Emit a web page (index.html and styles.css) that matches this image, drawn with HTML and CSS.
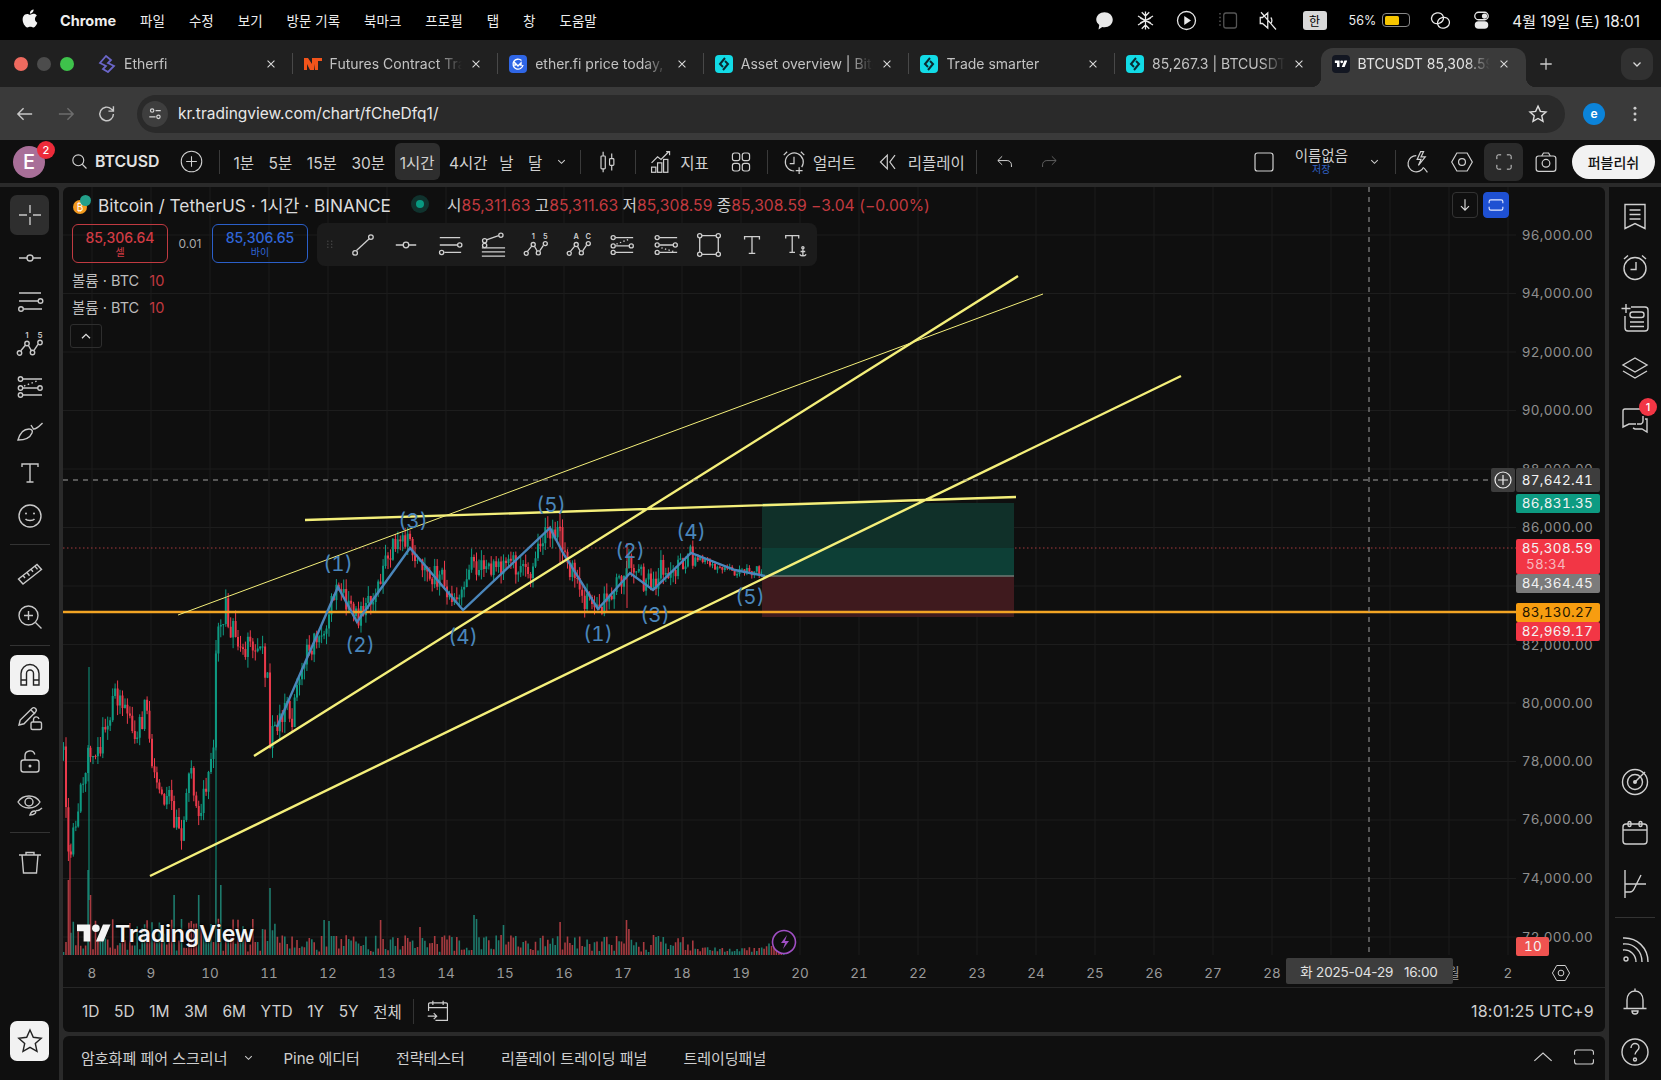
FILE: index.html
```html
<!DOCTYPE html>
<html lang="ko">
<head>
<meta charset="utf-8">
<title>BTCUSDT chart</title>
<link rel="stylesheet" href="styles.css">
</head>
<body>
<svg class="sprite" xmlns="http://www.w3.org/2000/svg">
  <symbol id="i-cross" viewBox="0 0 28 28"><path d="M14 4v8M14 16v8M3 14h8M17 14h8"/></symbol>
  <symbol id="i-hline" viewBox="0 0 28 28"><path d="M3 14h8M17 14h8"/><circle cx="14" cy="14" r="3"/></symbol>
  <symbol id="i-fib" viewBox="0 0 28 28"><path d="M3 6h22M3 14h19M8 22h18"/><circle cx="24.500" cy="14" r="2.300"/><circle cx="5" cy="22" r="2.300"/></symbol>
  <symbol id="i-wave" viewBox="0 0 28 28"><path d="M4.800 20.800l4.600-5.600M12.400 15.500l3 5.200M18 20.400l4-6"/><circle cx="3.500" cy="23" r="2.200"/><circle cx="11" cy="13.500" r="2.200"/><circle cx="16.500" cy="22.500" r="2.200"/><circle cx="24" cy="12.500" r="2.200"/></symbol>
  <symbol id="i-pat" viewBox="0 0 28 28"><path d="M7 6h19M7 15h15M7 22h19"/><path d="M8 13l13-5" stroke-dasharray="1.500 2.500"/><circle cx="4.500" cy="6" r="2.200"/><circle cx="4.500" cy="15" r="2.200"/><circle cx="4.500" cy="22" r="2.200"/><circle cx="24" cy="15" r="2.200"/></symbol>
  <symbol id="i-pat2" viewBox="0 0 28 28"><path d="M7 6h19M7 14h15M7 22h19"/><path d="M9 17l13 4" stroke-dasharray="1.500 2.500"/><circle cx="4.500" cy="6" r="2.200"/><circle cx="4.500" cy="14" r="2.200"/><circle cx="24" cy="14" r="2.200"/><circle cx="4.500" cy="22" r="2.200"/></symbol>
  <symbol id="i-brush" viewBox="0 0 28 28"><path d="M2 24c2-7 6-11 11-11 3 0 4 2 3 4-2 5-8 7-14 7z"/><path d="M15 9l2.500 4c3.500 0 6-3 9-6"/></symbol>
  <symbol id="i-t" viewBox="0 0 28 28"><path d="M6 8V5h16v3M14 5v18M10.500 23h7"/></symbol>
  <symbol id="i-tanchor" viewBox="0 0 28 28"><path d="M4 7V4h14v3M11 4v18M8 22h6"/><circle cx="22.500" cy="17" r="1.200"/><path d="M22.500 18.500v7M19 24c1 1.500 2.200 1.800 3.500 1.800s2.500-.3 3.500-1.800M20 21h5"/></symbol>
  <symbol id="i-smile" viewBox="0 0 28 28"><circle cx="14" cy="14" r="11"/><path d="M9.500 17c1.500 2 7.500 2 9 0"/><circle class="fill" cx="10" cy="11.500" r="1"/><circle class="fill" cx="18" cy="11.500" r="1"/></symbol>
  <symbol id="i-ruler" viewBox="0 0 28 28"><path d="M2.500 19L21 4.500l4.500 5L7 24z"/><path d="M7 15.500l2 2.500M11 12.500l2.500 3.200M15 9.300l2 2.500M19 6.200l2.500 3.200"/></symbol>
  <symbol id="i-zoom" viewBox="0 0 28 28"><circle cx="12.500" cy="12.500" r="9.500"/><path d="M12.500 8v9M8 12.500h9M19.500 19.500l6 6"/></symbol>
  <symbol id="i-magnet" viewBox="0 0 28 28"><path d="M5 24V12.500a9 9 0 0 1 18 0V24h-5.500V12.500a3.500 3.500 0 0 0-7 0V24z"/><path d="M5 19h5.500M17.500 19H23"/></symbol>
  <symbol id="i-penlock" viewBox="0 0 28 28"><path d="M3 21l1.200-5L16 4.500c1-1 2.500-1 3.500 0s1 2.500 0 3.500L8 19.800z"/><path d="M15 6l4 4"/><rect x="15" y="18" width="10.500" height="7.500" rx="1.500"/><path d="M17.500 18v-2.500a2.800 2.800 0 0 1 5.500-.5"/></symbol>
  <symbol id="i-lock" viewBox="0 0 28 28"><rect x="5" y="13" width="18" height="12" rx="2.500"/><path d="M9 13V9a5 5 0 0 1 9.800-1.500"/><circle class="fill" cx="14" cy="19" r="1.500"/></symbol>
  <symbol id="i-eye" viewBox="0 0 28 28"><path d="M2 12c5-8 17-8 22 0-5 8-17 8-22 0z"/><circle cx="13" cy="12" r="4"/><path d="M14 25c1-3 3-4 4.500-4s1.500 1.500.5 2.500-3 1.500-5 1.500zM20 20.500c2 .5 4-.5 6-2.500"/></symbol>
  <symbol id="i-trash" viewBox="0 0 28 28"><path d="M3 7h22M10 7V4.500h8V7M6 7l1.500 18h13L22 7"/></symbol>
  <symbol id="i-star" viewBox="0 0 28 28"><path d="M14 3l3.300 7.300 7.900.9-5.900 5.300 1.700 7.800-7-4-7 4 1.700-7.800-5.900-5.300 7.900-.9z"/></symbol>
  <symbol id="i-trend" viewBox="0 0 28 28"><path d="M7 20L21 7"/><circle cx="5.500" cy="22.500" r="2.500"/><circle cx="22.500" cy="5.500" r="2.500"/></symbol>
  <symbol id="i-pitch" viewBox="0 0 28 28"><path d="M7 8.500l13-4.500M5 12v.5M2 17h25M2 21.500h25M2 26h25"/><circle cx="5" cy="9.500" r="2.300"/><circle cx="22.500" cy="3.500" r="2.300"/><circle cx="5" cy="14.500" r="2.300"/></symbol>
  <symbol id="i-rect" viewBox="0 0 28 28"><path d="M6.500 4h15M6.500 24h15M4 6.500v15M24 6.500v15"/><circle cx="4" cy="4" r="2.300"/><circle cx="24" cy="4" r="2.300"/><circle cx="4" cy="24" r="2.300"/><circle cx="24" cy="24" r="2.300"/></symbol>
  <symbol id="i-search" viewBox="0 0 28 28"><circle cx="12" cy="12" r="9"/><path d="M18.500 18.500l7 7"/></symbol>
  <symbol id="i-plusc" viewBox="0 0 28 28"><circle cx="14" cy="14" r="12.500"/><path d="M14 7.500v13M7.500 14h13"/></symbol>
  <symbol id="i-candles" viewBox="0 0 28 28"><rect x="7" y="7" width="5" height="15" rx="1"/><rect x="17" y="10" width="5" height="8" rx="1"/><path d="M9.500 2v5M9.500 22v4M19.500 4v6M19.500 18v6"/></symbol>
  <symbol id="i-indic" viewBox="0 0 28 28"><rect x="3" y="20" width="5" height="6"/><rect x="10" y="15" width="5" height="11"/><rect x="17" y="11" width="5" height="15"/><path d="M3 15l7-7 4 3 9-9M20 2h4v4"/></symbol>
  <symbol id="i-grid4" viewBox="0 0 28 28"><rect x="4" y="3.500" width="8.500" height="9" rx="2.500"/><rect x="15.500" y="3.500" width="8.500" height="9" rx="2.500"/><rect x="4" y="15.500" width="8.500" height="9" rx="2.500"/><rect x="15.500" y="15.500" width="8.500" height="9" rx="2.500"/></symbol>
  <symbol id="i-alert" viewBox="0 0 28 28"><path d="M23 20a10.500 10.500 0 1 0-8.700 4.500M14 8v8h-5M20 20v8M16 24h8M2 6l4-4M26 6l-4-4"/></symbol>
  <symbol id="i-replay" viewBox="0 0 28 28"><path d="M12 6l-8 8 8 8V6zM21 6l-6 8 6 8"/></symbol>
  <symbol id="i-undo" viewBox="0 0 28 28"><path d="M10 6l-6 6 6 6M4 12h13c4 0 6 3 6 6v3"/></symbol>
  <symbol id="i-redo" viewBox="0 0 28 28"><path d="M18 6l6 6-6 6M24 12H11c-4 0-6 3-6 6v3"/></symbol>
  <symbol id="i-square" viewBox="0 0 28 28"><rect x="3.500" y="3.500" width="21" height="21" rx="3"/></symbol>
  <symbol id="i-bolt" viewBox="0 0 28 28"><path d="M20.500 20A9.500 9.500 0 1 1 12 6.500M17 2l-4 9h4.500l-3 7 8-10h-5l3-6zM21 21l4 5"/></symbol>
  <symbol id="i-hex" viewBox="0 0 28 28"><path d="M8 3.500h12L26 14l-6 10.500H8L2 14z"/><circle cx="14" cy="14" r="4"/></symbol>
  <symbol id="i-full" viewBox="0 0 28 28"><path d="M4 10V6a2 2 0 0 1 2-2h4M18 4h4a2 2 0 0 1 2 2v4M24 18v4a2 2 0 0 1-2 2h-4M10 24H6a2 2 0 0 1-2-2v-4"/></symbol>
  <symbol id="i-camera" viewBox="0 0 28 28"><rect x="2.500" y="7" width="23" height="18" rx="3"/><path d="M9 7l2-3.500h6L19 7"/><circle cx="14" cy="15.500" r="4.500"/></symbol>
  <symbol id="i-flag" viewBox="0 0 28 28"><path d="M4 2.500h20v24l-10-5-10 5zM8.500 8h11M8.500 12.500h11M8.500 17h11"/></symbol>
  <symbol id="i-clock" viewBox="0 0 28 28"><circle cx="14" cy="15.500" r="11"/><path d="M15 9v7.500H9.500M3 6l4-3.500M25 6l-4-3.500"/></symbol>
  <symbol id="i-addlist" viewBox="0 0 28 28"><path d="M10 3h14a3 3 0 0 1 3 3v18a3 3 0 0 1-3 3H7a3 3 0 0 1-3-3V12"/><rect x="9" y="8" width="14" height="5.500" rx="2.500"/><path d="M9 18h14M9 22.500h14M5 0v9M.5 4.500h9"/></symbol>
  <symbol id="i-layers" viewBox="0 0 28 28"><path d="M14 3l12 7-12 7-12-7zM2 16l12 7 12-7"/></symbol>
  <symbol id="i-chat" viewBox="0 0 28 28"><path d="M19 3H4a2 2 0 0 0-2 2v16l6-3h7M16 18h4a3 3 0 0 0 2-3v-5M24 13h2v13l-5-3h-7l-2-1"/></symbol>
  <symbol id="i-target" viewBox="0 0 28 28"><circle cx="14" cy="14" r="12.500"/><circle cx="14" cy="14" r="7.500"/><circle class="fill" cx="14" cy="14" r="2"/><path d="M14 14L24 4"/></symbol>
  <symbol id="i-cal" viewBox="0 0 28 28"><rect x="2" y="5" width="24" height="20" rx="3"/><path d="M2 11h24"/><rect x="7" y="2.500" width="3" height="5" rx="1.500"/><rect x="18" y="2.500" width="3" height="5" rx="1.500"/></symbol>
  <symbol id="i-opt" viewBox="0 0 28 28"><path d="M4 0v28M4 14h21M4 22h5c2 0 3-1 4-3L20 5"/></symbol>
  <symbol id="i-rss" viewBox="0 0 28 28"><circle cx="5" cy="23" r="2"/><path d="M2 14c7-1 13 5 13 12M2 8c11-1 19 7 19 18M2 2c14-1 25 10 25 24"/></symbol>
  <symbol id="i-bell" viewBox="0 0 28 28"><path d="M6 21V13c0-5 3-9 8-9s8 4 8 9v8M2.500 21.500h23M14 1.500V4M11 24a3 3 0 0 0 6 0z"/></symbol>
  <symbol id="i-help" viewBox="0 0 28 28"><circle cx="14" cy="14" r="13"/><path d="M10 10c0-3 2-4.500 4-4.500s4 1.500 4 4c0 3-4 3.500-4 7"/><circle cx="14" cy="21.500" r="1.500"/></symbol>
  <symbol id="i-calgo" viewBox="0 0 28 28"><path d="M3 14V6a1.500 1.500 0 0 1 1.500-1.500h19A1.500 1.500 0 0 1 25 6v19H11M3 10h22M8 2v5M20 2v5M2 20h10M9 16.500l3.500 3.500L9 23.500"/></symbol>
  <symbol id="i-expand" viewBox="0 0 28 28"><path d="M5 5h18a3 3 0 0 1 3 3v3M26 17v3a3 3 0 0 1-3 3H5a3 3 0 0 1-3-3v-3M2 11V8a3 3 0 0 1 3-3"/></symbol>
  <symbol id="i-left" viewBox="0 0 28 28"><path d="M24 14H5M12 6l-8 8 8 8"/></symbol>
  <symbol id="i-right" viewBox="0 0 28 28"><path d="M4 14h19M16 6l8 8-8 8"/></symbol>
  <symbol id="i-reload" viewBox="0 0 28 28"><path d="M23 14a9.500 9.500 0 1 1-3-7l3 2.500M23 3v7h-7"/></symbol>
  <symbol id="i-tune" viewBox="0 0 28 28"><circle cx="9" cy="8" r="3"/><path d="M15 8h9M4 19h11"/><circle cx="20" cy="19" r="3"/></symbol>
  <symbol id="i-down" viewBox="0 0 28 28"><path d="M14 4v19M7 16l7 7 7-7"/></symbol>
  <symbol id="i-up" viewBox="0 0 28 28"><path d="M7 18l7-7 7 7"/></symbol>
  <symbol id="i-caret" viewBox="0 0 28 28"><path d="M3 19L14 9l11 10"/></symbol>
  <symbol id="i-chev" viewBox="0 0 28 28"><path d="M7 11l7 7 7-7"/></symbol>
  <symbol id="i-x" viewBox="0 0 28 28"><path d="M6 6l16 16M22 6L6 22"/></symbol>
  <symbol id="i-plus" viewBox="0 0 28 28"><path d="M14 4v20M4 14h20"/></symbol>
  <symbol id="i-snow" viewBox="0 0 28 28"><path d="M14 2v24M4 8l20 12M24 8L4 20M9 3l5 5 5-5M9 25l5-5 5 5M7 11l7 3 7-3M7 17l7-3 7 3"/></symbol>
  <symbol id="i-play" viewBox="0 0 28 28"><circle cx="14" cy="14" r="12"/><path class="fill" d="M11 8l9 6-9 6z"/></symbol>
  <symbol id="i-dsq" viewBox="0 0 28 28"><rect x="9" y="4" width="17" height="20" rx="3"/><path d="M3 5h2M3 10h2M3 15h2M3 20h2"/></symbol>
  <symbol id="i-mute" viewBox="0 0 28 28"><path d="M6 10l7-6v20l-7-6H3v-8zM4 3l20 23M17 10c2 2 2 6 0 8"/></symbol>
  <symbol id="i-link" viewBox="0 0 28 28"><rect x="2" y="4" width="16" height="14" rx="7" transform="rotate(-15 10 11)"/><rect x="10" y="10" width="16" height="14" rx="7" transform="rotate(-15 18 17)"/></symbol>
  <symbol id="i-toggle" viewBox="0 0 28 28"><rect x="5" y="3" width="18" height="10" rx="5"/><circle class="fill" cx="18" cy="8" r="3.500"/><rect class="fill" x="5" y="15" width="18" height="10" rx="5"/></symbol>
  <symbol id="i-tv" viewBox="0 0 36 24"><path class="fill" d="M14 20H7V9H0V2h14zM28 20h-8l7.500-18h8z"/><circle class="fill" cx="20" cy="6" r="4"/></symbol>
  <symbol id="i-apple" viewBox="0 0 24 24"><path class="fill" d="M12.152 6.896c-.948 0-2.415-1.078-3.960-1.040-2.040.027-3.910 1.183-4.961 3.014-2.117 3.675-.546 9.103 1.519 12.090 1.013 1.454 2.208 3.090 3.792 3.039 1.520-.065 2.090-.987 3.935-.987 1.831 0 2.350.987 3.960.948 1.637-.026 2.676-1.480 3.676-2.948 1.156-1.688 1.636-3.325 1.662-3.415-.039-.013-3.182-1.221-3.220-4.857-.026-3.040 2.480-4.494 2.597-4.559-1.429-2.090-3.623-2.324-4.390-2.376-2-.156-3.675 1.090-4.610 1.090zM15.530 3.830c.843-1.012 1.400-2.427 1.245-3.830-1.207.052-2.662.805-3.532 1.818-.780.896-1.454 2.338-1.273 3.714 1.338.104 2.715-.688 3.559-1.701"/></symbol>
  <symbol id="i-bubble" viewBox="0 0 28 28"><path class="fill" d="M14 3c6 0 11 4 11 10s-5 10-11 10c-1 0-2 0-3-.300L6 26l1-6c-2-2-4-4-4-7C3 7 8 3 14 3z"/></symbol>
  <symbol id="i-kebab" viewBox="0 0 28 28"><circle class="fill" cx="14" cy="5" r="2.300"/><circle class="fill" cx="14" cy="14" r="2.300"/><circle class="fill" cx="14" cy="23" r="2.300"/></symbol>
  <symbol id="i-grip" viewBox="0 0 28 28"><g class="fill"><circle cx="9" cy="5" r="1.500"/><circle cx="18" cy="5" r="1.500"/><circle cx="9" cy="12" r="1.500"/><circle cx="18" cy="12" r="1.500"/><circle cx="9" cy="19" r="1.500"/><circle cx="18" cy="19" r="1.500"/></g></symbol>
</svg>

<header class="menubar">
  <div class="menu-left">
    <svg class="ic apple"><use href="#i-apple"/></svg>
    <span class="menu-app">Chrome</span>
    <span>파일</span><span>수정</span><span>보기</span><span>방문 기록</span><span>북마크</span><span>프로필</span><span>탭</span><span>창</span><span>도움말</span>
  </div>
  <div class="menu-right">
    <svg class="ic st"><use href="#i-bubble"/></svg>
    <svg class="ic st"><use href="#i-snow"/></svg>
    <svg class="ic st"><use href="#i-play"/></svg>
    <svg class="ic st dim"><use href="#i-dsq"/></svg>
    <svg class="ic st"><use href="#i-mute"/></svg>
    <span class="ime">한</span>
    <span class="pct">56%</span>
    <span class="battery"><span class="battery-fill"></span></span>
    <svg class="ic st"><use href="#i-link"/></svg>
    <svg class="ic st"><use href="#i-toggle"/></svg>
    <span class="clock">4월 19일 (토) 18:01</span>
  </div>
</header>

<div class="tabstrip">
  <div class="lights"><i class="light red"></i><i class="light gray"></i><i class="light green"></i></div>
  <div class="tabs">
    <div class="tab">
      <svg class="fav" viewBox="0 0 18 18"><path d="M8 1L2 8l6 3-3 3 5 3 6-6-6-3 3-3z" fill="none" stroke="#6b66c9" stroke-width="1.800"/></svg>
      <span class="tab-title">Etherfi</span><svg class="ic tab-x"><use href="#i-x"/></svg>
    </div>
    <div class="tab">
      <svg class="fav" viewBox="0 0 18 18"><path d="M0 3h4l4 6V3h10v3h-4v9h-3V9l-1 6H6L3 9v6H0z" fill="#f2541b"/></svg>
      <span class="tab-title">Futures Contract Trading</span><svg class="ic tab-x"><use href="#i-x"/></svg>
    </div>
    <div class="tab">
      <svg class="fav" viewBox="0 0 18 18"><rect width="18" height="18" rx="4" fill="#2f66e6"/><path d="M14 10a5 5 0 1 1-1.500-4.500M6 11V8l3 3 3-3v3" fill="none" stroke="#fff" stroke-width="1.400"/></svg>
      <span class="tab-title">ether.fi price today, ETHFI</span><svg class="ic tab-x"><use href="#i-x"/></svg>
    </div>
    <div class="tab">
      <svg class="fav" viewBox="0 0 18 18"><rect width="18" height="18" rx="4" fill="#12dbe6"/><path d="M10 3L5 9l3 3M8 15l5-6-3-3" fill="none" stroke="#0a2a30" stroke-width="2"/></svg>
      <span class="tab-title">Asset overview | Bitget</span><svg class="ic tab-x"><use href="#i-x"/></svg>
    </div>
    <div class="tab">
      <svg class="fav" viewBox="0 0 18 18"><rect width="18" height="18" rx="4" fill="#12dbe6"/><path d="M10 3L5 9l3 3M8 15l5-6-3-3" fill="none" stroke="#0a2a30" stroke-width="2"/></svg>
      <span class="tab-title">Trade smarter</span><svg class="ic tab-x"><use href="#i-x"/></svg>
    </div>
    <div class="tab before-active">
      <svg class="fav" viewBox="0 0 18 18"><rect width="18" height="18" rx="4" fill="#12dbe6"/><path d="M10 3L5 9l3 3M8 15l5-6-3-3" fill="none" stroke="#0a2a30" stroke-width="2"/></svg>
      <span class="tab-title">85,267.3 | BTCUSDT</span><svg class="ic tab-x"><use href="#i-x"/></svg>
    </div>
    <div class="tab active">
      <svg class="fav" viewBox="0 0 18 18"><rect width="18" height="18" rx="4" fill="#131722"/><svg x="2.500" y="3.500" width="13" height="11"><use href="#i-tv" class="tv-white"/></svg></svg>
      <span class="tab-title">BTCUSDT 85,308.59</span><svg class="ic tab-x"><use href="#i-x"/></svg>
    </div>
  </div>
  <svg class="ic new-tab"><use href="#i-plus"/></svg>
  <div class="tab-menu"><svg class="ic"><use href="#i-chev"/></svg></div>
</div>

<div class="addressbar">
  <svg class="ic nav"><use href="#i-left"/></svg>
  <svg class="ic nav off"><use href="#i-right"/></svg>
  <svg class="ic nav"><use href="#i-reload"/></svg>
  <div class="omnibox">
    <span class="site-info"><svg class="ic"><use href="#i-tune"/></svg></span>
    <span class="url">kr.tradingview.com/chart/fCheDfq1/</span>
    <svg class="ic omni-star"><use href="#i-star"/></svg>
  </div>
  <span class="profile">e</span>
  <svg class="ic kebab"><use href="#i-kebab"/></svg>
</div>

<div class="tv-toolbar">
  <div class="avatar">E<span class="avatar-badge">2</span></div>
  <svg class="ic tb-ic search"><use href="#i-search"/></svg>
  <span class="symbol">BTCUSD</span>
  <svg class="ic tb-ic plusc"><use href="#i-plusc"/></svg>
  <i class="vsep"></i>
  <div class="intervals">
    <span>1분</span><span>5분</span><span>15분</span><span>30분</span><span class="on">1시간</span><span>4시간</span><span class="day">날</span><span>달</span>
  </div>
  <svg class="ic tiny"><use href="#i-chev"/></svg>
  <i class="vsep s2"></i>
  <svg class="ic tb-ic"><use href="#i-candles"/></svg>
  <i class="vsep"></i>
  <svg class="ic tb-ic"><use href="#i-indic"/></svg>
  <span class="tb-label">지표</span>
  <svg class="ic tb-ic grid4"><use href="#i-grid4"/></svg>
  <i class="vsep s4"></i>
  <svg class="ic tb-ic"><use href="#i-alert"/></svg>
  <span class="tb-label">얼러트</span>
  <svg class="ic tb-ic replay"><use href="#i-replay"/></svg>
  <span class="tb-label">리플레이</span>
  <i class="vsep s5"></i>
  <svg class="ic tb-ic undo"><use href="#i-undo"/></svg>
  <svg class="ic tb-ic redo"><use href="#i-redo"/></svg>
  <div class="tb-right">
    <svg class="ic tb-ic"><use href="#i-square"/></svg>
    <div class="layout-name"><span>이름없음</span><small>저장</small></div>
    <svg class="ic tiny"><use href="#i-chev"/></svg>
    <i class="vsep"></i>
    <svg class="ic tb-ic boltic"><use href="#i-bolt"/></svg>
    <svg class="ic tb-ic hexic"><use href="#i-hex"/></svg>
    <span class="full-box"><svg class="ic tb-ic"><use href="#i-full"/></svg></span>
    <svg class="ic tb-ic camic"><use href="#i-camera"/></svg>
    <button class="publish">퍼블리쉬</button>
  </div>
</div>

<main class="workspace">
  <aside class="left-tools">
    <span class="tool on"><svg class="ic"><use href="#i-cross"/></svg></span>
    <span class="tool"><svg class="ic"><use href="#i-hline"/></svg></span>
    <span class="tool"><svg class="ic"><use href="#i-fib"/></svg></span>
    <span class="tool"><svg class="ic" viewBox="0 0 28 28"><use href="#i-wave"/><text x="11" y="8" class="ic-t">1</text><text x="24" y="8" class="ic-t">5</text></svg></span>
    <span class="tool"><svg class="ic"><use href="#i-pat"/></svg></span>
    <span class="tool"><svg class="ic"><use href="#i-brush"/></svg></span>
    <span class="tool"><svg class="ic"><use href="#i-t"/></svg></span>
    <span class="tool"><svg class="ic"><use href="#i-smile"/></svg></span>
    <i class="hsep"></i>
    <span class="tool"><svg class="ic"><use href="#i-ruler"/></svg></span>
    <span class="tool"><svg class="ic"><use href="#i-zoom"/></svg></span>
    <i class="hsep"></i>
    <span class="tool white"><svg class="ic"><use href="#i-magnet"/></svg></span>
    <span class="tool"><svg class="ic"><use href="#i-penlock"/></svg></span>
    <span class="tool"><svg class="ic"><use href="#i-lock"/></svg></span>
    <span class="tool"><svg class="ic"><use href="#i-eye"/></svg></span>
    <i class="hsep"></i>
    <span class="tool"><svg class="ic"><use href="#i-trash"/></svg></span>
    <span class="tool white push"><svg class="ic"><use href="#i-star"/></svg></span>
  </aside>

  <section class="center">
    <div class="chart-pane">
      <div class="chart-canvas">
        <svg class="chart" viewBox="63 187 1542 800" xmlns="http://www.w3.org/2000/svg">
          <path class="grid" d="M63 235H1516M63 293.500H1516M63 352H1516M63 410.500H1516M63 469H1516M63 527.500H1516M63 586H1516M63 644.500H1516M63 703H1516M63 761.500H1516M63 820H1516M63 878.500H1516M63 937H1516M92 187V955M151 187V955M210 187V955M269 187V955M328 187V955M387 187V955M446 187V955M505 187V955M564 187V955M623 187V955M682 187V955M741 187V955M800 187V955M859 187V955M918 187V955M977 187V955M1036 187V955M1095 187V955M1154 187V955M1213 187V955M1272 187V955M1331 187V955M1390 187V955M1449 187V955M1508 187V955"/>
          <g id="volume"></g>
          <path class="dotted" d="M63 548H1516"/>
          <g id="candles"></g>
          <rect class="pos-g1" x="762" y="503" width="252" height="45"/>
          <rect class="pos-g2" x="762" y="548" width="252" height="28"/>
          <rect class="pos-r" x="762" y="576" width="252" height="41"/>
          <path class="pos-mid" d="M762 576H1014"/>
          <path class="orange" d="M63 612H1516"/>
          <polyline class="wave" points="277,727 338,587 357,622 410,548 463,610 550,528 563,553 598,609 630,573 653,590 691,553 735,570 765,576"/>
          <path class="yl" d="M254 756L1018 276M150 876L1181 376M305 520L1016 497"/>
          <path class="yl thin" d="M178 615L1043 294"/>
          <g class="wave-labels">
            <text x="551" y="512">(5)</text><text x="413" y="528">(3)</text><text x="338" y="571">(1)</text><text x="360" y="652">(2)</text><text x="463" y="644">(4)</text><text x="630" y="558">(2)</text><text x="655" y="622">(3)</text><text x="598" y="641">(1)</text><text x="691" y="539">(4)</text><text x="750" y="604">(5)</text>
          </g>
          <path class="cross" d="M63 480H1490M1369 187V957"/>
          <g class="bolt-mark"><circle cx="784" cy="942" r="11.500"/><path d="M787 935l-6 8h4l-2 6 6-8h-4z"/></g>
          <g class="ticks">
            <text x="1593" y="240">96,000.00</text><text x="1593" y="298">94,000.00</text><text x="1593" y="357">92,000.00</text><text x="1593" y="415">90,000.00</text><text x="1593" y="474">88,000.00</text><text x="1593" y="532">86,000.00</text><text x="1593" y="650">82,000.00</text><text x="1593" y="708">80,000.00</text><text x="1593" y="766">78,000.00</text><text x="1593" y="824">76,000.00</text><text x="1593" y="883">74,000.00</text><text x="1593" y="942">72,000.00</text>
          </g>
          <g class="tags">
            <rect class="t-cross" x="1491" y="468" width="24" height="24" rx="2"/>
            <circle class="t-plus" cx="1503" cy="480" r="8"/><path class="t-plus" d="M1503 475v10M1498 480h10"/>
            <rect class="t-cross" x="1516" y="468" width="84" height="24" rx="2"/><text x="1593" y="485">87,642.41</text>
            <rect class="t-green" x="1516" y="494" width="84" height="19" rx="2"/><text x="1593" y="508">86,831.35</text>
            <rect class="t-red" x="1516" y="539" width="84" height="35" rx="2"/><text x="1593" y="553">85,308.59</text><text class="t-sub" x="1526" y="569">58:34</text>
            <rect class="t-gray" x="1516" y="574" width="84" height="19" rx="2"/><text x="1593" y="588">84,364.45</text>
            <rect class="t-orange" x="1516" y="603" width="84" height="19" rx="2"/><text class="t-dark" x="1593" y="617">83,130.27</text>
            <rect class="t-red" x="1516" y="622" width="84" height="19" rx="2"/><text x="1593" y="636">82,969.17</text>
            <rect class="t-vol" x="1516" y="937" width="33" height="19" rx="2"/><text class="t-center" x="1533" y="951">10</text>
          </g>
          <g class="times">
            <text x="92" y="978">8</text><text x="151" y="978">9</text><text x="210" y="978">10</text><text x="269" y="978">11</text><text x="328" y="978">12</text><text x="387" y="978">13</text><text x="446" y="978">14</text><text x="505" y="978">15</text><text x="564" y="978">16</text><text x="623" y="978">17</text><text x="682" y="978">18</text><text x="741" y="978">19</text><text x="800" y="978">20</text><text x="859" y="978">21</text><text x="918" y="978">22</text><text x="977" y="978">23</text><text x="1036" y="978">24</text><text x="1095" y="978">25</text><text x="1154" y="978">26</text><text x="1213" y="978">27</text><text x="1272" y="978">28</text><text x="1449" y="978">5월</text><text x="1508" y="978">2</text>
          </g>
          <rect class="t-cross" x="1286" y="958" width="167" height="26" rx="2"/>
          <text class="time-cross" x="1369" y="977">화 2025-04-29   16:00</text>
        </svg>

        <div class="legend">
          <div class="legend-title">
            <span class="coin"><i class="coin-b">₿</i><i class="coin-e"></i></span>
            <span class="legend-name">Bitcoin / TetherUS · 1시간 · BINANCE</span>
            <span class="live"><i></i></span>
            <span class="ohlc"><b>시</b>85,311.63 <b>고</b>85,311.63 <b>저</b>85,308.59 <b>종</b>85,308.59 −3.04 (−0.00%)</span>
          </div>
          <div class="trade-row">
            <div class="trade sell"><strong>85,306.64</strong><small>셀</small></div>
            <span class="qty">0.01</span>
            <div class="trade buy"><strong>85,306.65</strong><small>바이</small></div>
            <div class="drawbar">
              <svg class="ic grip"><use href="#i-grip"/></svg>
              <svg class="ic"><use href="#i-trend"/></svg>
              <svg class="ic"><use href="#i-hline"/></svg>
              <svg class="ic"><use href="#i-fib"/></svg>
              <svg class="ic"><use href="#i-pitch"/></svg>
              <svg class="ic" viewBox="0 0 28 28"><use href="#i-wave"/><text x="11" y="8" class="ic-t">1</text><text x="24" y="8" class="ic-t">5</text></svg>
              <svg class="ic" viewBox="0 0 28 28"><use href="#i-wave"/><text x="11" y="8" class="ic-t">A</text><text x="24" y="8" class="ic-t">C</text></svg>
              <svg class="ic"><use href="#i-pat"/></svg>
              <svg class="ic"><use href="#i-pat2"/></svg>
              <svg class="ic"><use href="#i-rect"/></svg>
              <svg class="ic"><use href="#i-t"/></svg>
              <svg class="ic"><use href="#i-tanchor"/></svg>
            </div>
          </div>
          <div class="study first">볼륨 · BTC <em>10</em></div>
          <div class="study">볼륨 · BTC <em>10</em></div>
          <span class="collapse"><svg class="ic"><use href="#i-up"/></svg></span>
        </div>

        <div class="pane-btns">
          <span class="pane-btn"><svg class="ic"><use href="#i-down"/></svg></span>
          <span class="pane-btn blue"><svg class="ic"><use href="#i-expand"/></svg></span>
        </div>

        <div class="watermark"><svg class="ic wm-logo"><use href="#i-tv"/></svg><span>TradingView</span></div>

        <svg class="ic axis-gear"><use href="#i-hex"/></svg>
      </div>

      <div class="range-bar">
        <span>1D</span><span>5D</span><span>1M</span><span>3M</span><span>6M</span><span>YTD</span><span>1Y</span><span>5Y</span><span>전체</span>
        <i class="vsep"></i>
        <svg class="ic go-date"><use href="#i-calgo"/></svg>
        <span class="utc">18:01:25 UTC+9</span>
      </div>
    </div>

    <div class="bottom-panel">
      <span>암호화폐 페어 스크리너</span>
      <svg class="ic tiny"><use href="#i-chev"/></svg>
      <span class="pine">Pine 에디터</span>
      <span>전략테스터</span>
      <span>리플레이 트레이딩 패널</span>
      <span>트레이딩패널</span>
      <svg class="ic caret"><use href="#i-caret"/></svg>
      <svg class="ic pexp"><use href="#i-expand"/></svg>
    </div>
  </section>

  <aside class="right-tools">
    <span class="rtool"><svg class="ic"><use href="#i-flag"/></svg></span>
    <span class="rtool"><svg class="ic"><use href="#i-clock"/></svg></span>
    <span class="rtool"><svg class="ic"><use href="#i-addlist"/></svg></span>
    <span class="rtool"><svg class="ic"><use href="#i-layers"/></svg></span>
    <span class="rtool chat"><svg class="ic"><use href="#i-chat"/></svg><b class="chat-badge">1</b></span>
    <span class="rtool push"><svg class="ic"><use href="#i-target"/></svg></span>
    <span class="rtool"><svg class="ic"><use href="#i-cal"/></svg></span>
    <span class="rtool"><svg class="ic"><use href="#i-opt"/></svg></span>
    <i class="hsep"></i>
    <span class="rtool"><svg class="ic"><use href="#i-rss"/></svg></span>
    <span class="rtool"><svg class="ic"><use href="#i-bell"/></svg></span>
    <span class="rtool"><svg class="ic"><use href="#i-help"/></svg></span>
  </aside>
</main>
<script src="chart.js"></script>
</body>
</html>
```
FILE: styles.css
```css
* { box-sizing: border-box; }
html, body { margin: 0; height: 100%; }
body {
  width: 1661px; height: 1080px; overflow: hidden;
  display: flex; flex-direction: column;
  background: #2a2a2a; color: #d8d8d8;
  font-family: Inter, "Noto Sans CJK KR", sans-serif; font-size: 14px;
}
.sprite { position: absolute; width: 0; height: 0; }
.ic { width: 24px; height: 24px; fill: none; stroke: currentColor; stroke-width: 1.4; flex: none; display: block; }
.ic .fill, .fill { fill: currentColor; stroke: none; }
symbol .fill { fill: currentColor; stroke: none; }
.ic-t { font: 600 8px Inter, sans-serif; fill: currentColor; stroke: none; text-anchor: middle; }

/* menu bar */
.menubar { height: 40px; flex: none; background: #000; color: #eee; display: flex; align-items: center; justify-content: space-between; padding: 0 21px 0 21px; font-size: 13.5px; }
.menu-left { display: flex; align-items: center; gap: 24px; }
.apple { width: 18px; height: 19px; margin-right: -3px; color: #f3f3f3; margin-top: -3px; }
.menu-app { font-weight: 700; font-size: 14.5px; }
.menu-right { display: flex; align-items: center; gap: 20px; }
.st { width: 21px; height: 21px; stroke-width: 1.7; color: #e8e8e8; }
.st.dim { color: #555; }
.ime { width: 24px; height: 19px; margin-left: 4px; background: #d8d8d8; color: #000; border-radius: 3px; display: flex; align-items: center; justify-content: center; font-size: 12px; }
.pct { font-size: 12.5px; margin-left: 2px; margin-right: -14px; }
.battery { width: 28px; height: 14px; border: 1px solid #888; border-radius: 4px; padding: 1.5px; display: block; }
.battery-fill { display: block; width: 14px; height: 100%; background: #f7c600; border-radius: 1.5px; }
.clock { font-size: 15.3px; }

/* tabs */
.tabstrip { height: 47px; flex: none; background: #202020; display: flex; align-items: flex-end; position: relative; }
.lights { width: 87px; flex: none; display: flex; gap: 9px; padding: 0 0 16px 14px; }
.light { width: 14px; height: 14px; border-radius: 50%; }
.light.red { background: #ee6a5f; }
.light.gray { background: #4c4c4c; }
.light.green { background: #3ec24b; }
.tabs { display: grid; grid-template-columns: repeat(7, 205.6px); flex: none; height: 39px; }
.tab { display: flex; align-items: center; gap: 8px; padding: 0 16px 8px 11px; position: relative; color: #c2c2c2; font-size: 14px; }
.tab:not(.active):not(.before-active)::after { content: ""; position: absolute; right: 0; top: 5px; width: 1px; height: 21px; background: #484848; }
.fav { width: 18px; height: 18px; flex: none; }
.tab-title { flex: 1; min-width: 0; white-space: nowrap; overflow: hidden; -webkit-mask-image: linear-gradient(90deg, #000 82%, transparent 100%); mask-image: linear-gradient(90deg, #000 82%, transparent 100%); }
.tab-x { width: 12px; height: 12px; stroke-width: 2.4; color: #ddd; }
.tab.active { background: #3a3a3a; border-radius: 12px 12px 0 0; color: #e4e4e4; }
.tab.active::before, .tab.active::after { content: ""; position: absolute; bottom: 0; width: 10px; height: 10px; }
.tab.active::before { left: -10px; background: radial-gradient(circle at 0 0, transparent 10px, #3a3a3a 10.5px); }
.tab.active::after { right: -10px; background: radial-gradient(circle at 100% 0, transparent 10px, #3a3a3a 10.5px); }
.tv-white { color: #fff; }
.new-tab { width: 16px; height: 16px; stroke-width: 2.2; margin: 0 0 15px 12px; color: #ccc; }
.tab-menu { width: 32px; height: 32px; border-radius: 11px; background: #313131; margin: 0 0 7px auto; margin-right: 8px; display: flex; align-items: center; justify-content: center; }
.tab-menu .ic { width: 14px; height: 14px; stroke-width: 2.6; }

/* address bar */
.addressbar { height: 53px; flex: none; background: #3a3a3a; display: flex; align-items: center; padding: 0 14px 0 15px; }
.nav { width: 20px; height: 20px; margin-right: 21px; stroke-width: 2; color: #c8c8c8; }
.nav.off { color: #6d6d6d; }
.omnibox { width: 1428px; height: 38px; background: #2a2a2a; border-radius: 19px; display: flex; align-items: center; padding: 0 17px 0 5px; flex: none; margin-left: -1px; }
.site-info { width: 26px; height: 26px; border-radius: 50%; background: #3e3e3e; display: flex; align-items: center; justify-content: center; margin-right: 10px; }
.site-info .ic { width: 16px; height: 16px; stroke-width: 2; }
.url { font-size: 15.5px; color: #e8e8e8; flex: 1; }
.omni-star { width: 20px; height: 20px; stroke-width: 2; color: #ddd; }
.profile { width: 22px; height: 22px; border-radius: 50%; background: #0b83d9; color: #fff; display: flex; align-items: center; justify-content: center; font-size: 12px; font-weight: 600; margin-left: 18px; flex: none; }
.kebab { width: 18px; height: 18px; margin-left: 21px; color: #ccc; }

/* tradingview toolbar */
.tv-toolbar { height: 43px; flex: none; background: #0f0f0f; display: flex; align-items: center; padding-left: 13px; color: #d0d0d0; }
.avatar { width: 32px; height: 32px; border-radius: 50%; background: #a86f98; color: #fff; font-size: 20px; font-weight: 500; display: flex; align-items: center; justify-content: center; position: relative; flex: none; }
.avatar-badge { position: absolute; top: -5px; right: -10px; width: 18px; height: 18px; border-radius: 50%; background: #ec2b3a; color: #fff; font-size: 11px; font-weight: 500; display: flex; align-items: center; justify-content: center; }
.tb-ic { width: 24px; height: 24px; }
.search { width: 17px; height: 17px; margin-left: 26px; stroke-width: 1.9; }
.symbol { font-size: 15.8px; font-weight: 600; margin-left: 7px; color: #e2e2e2; }
.plusc { width: 23px; height: 23px; margin-left: 21px; stroke-width: 1.3; }
.vsep { width: 1px; height: 24px; background: #3a3a3a; flex: none; display: block; }
.tv-toolbar > .vsep { margin: 0 13px 0 16px; }
.tv-toolbar > .vsep.s2 { margin: 0 14px 0 12px; }
.tv-toolbar > .vsep.s4 { margin: 0 14px; }
.tv-toolbar > .vsep.s5 { margin: 0 17px 0 11px; }
.intervals { display: flex; gap: 4.6px; margin-left: -5px; font-size: 15.5px; }
.intervals span { padding: 0 5px; height: 37px; display: flex; align-items: center; border-radius: 6px; white-space: nowrap; }
.intervals .on { background: #2e2e2e; }
.intervals .day { margin-left: -3px; }
.tiny { width: 13px; height: 13px; stroke-width: 2.2; margin-left: 8px; }
.tb-label { font-size: 15.5px; margin-left: 7px; }
.grid4 { margin-left: 20px; }
.replay { margin-left: 21px; }
.undo { width: 20px; height: 20px; margin-left: 1px; }
.redo { width: 20px; height: 20px; margin-left: 24px; color: #5f5f5f; }
.tb-right { margin-left: auto; display: flex; align-items: center; padding-right: 6px; gap: 17px; }
.tb-right .vsep { margin: 0 -2px 0 -3px; }
.layout-name { display: flex; flex-direction: column; align-items: center; font-size: 14.5px; line-height: 16px; margin-left: 2px; }
.layout-name small { font-size: 10px; line-height: 11px; color: #2f63c9; }
.tb-right .tiny { margin-left: 3px; }
.boltic { margin-left: -5px; }
.hexic { margin-left: 3px; }
.camic { margin-right: -3px; }
.full-box { width: 39px; height: 38px; background: #2a2a2a; border-radius: 7px; display: flex; align-items: center; justify-content: center; margin: 0 -6px 0 -7px; }
.full-box .tb-ic { width: 20px; height: 20px; }
.publish { width: 83px; height: 34px; border: 0; border-radius: 17px; background: #f2f2f2; color: #111; font: 500 14px Inter, "Noto Sans CJK KR", sans-serif; }

/* workspace */
.workspace { flex: 1; min-height: 0; display: flex; padding-top: 4px; gap: 4px; }
.left-tools { width: 59px; flex: none; background: #0f0f0f; display: flex; flex-direction: column; align-items: center; padding: 6px 0 0; color: #c8c8c8; border-top-right-radius: 5px; }
.tool { width: 39px; height: 43px; display: flex; align-items: center; justify-content: center; flex: none; position: relative; }
.tool .ic { width: 28px; height: 28px; }
.tool.on::before, .tool.white::before { content: ""; position: absolute; left: 0; right: 0; top: 1.5px; bottom: 1.5px; border-radius: 7px; }
.tool.on::before { background: #2e2e2e; }
.tool.white::before { background: #f2f2f2; }
.tool.on .ic, .tool.white .ic { position: relative; }
.tool.white { color: #222; }
.tool.push { margin-top: auto; margin-bottom: 18px; }
.hsep { display: block; width: 40px; height: 1px; background: #333; margin: 7px 0; flex: none; }

.center { width: 1542px; flex: none; display: flex; flex-direction: column; gap: 4px; min-height: 0; }
.chart-pane { flex: 1; min-height: 0; background: #0f0f0f; border-radius: 6px; display: flex; flex-direction: column; overflow: hidden; }
.chart-canvas { height: 801px; flex: none; position: relative; border-bottom: 1px solid #262626; }
.chart { position: absolute; left: 0; top: 0; width: 1542px; height: 800px; display: block; font-family: Inter, "Noto Sans CJK KR", sans-serif; font-variant-numeric: tabular-nums; }

.grid { stroke: #1d1d1d; stroke-width: 1; fill: none; }
.dotted { stroke: #a33a3f; stroke-width: 1; stroke-dasharray: 1.5 2.5; fill: none; }
.pos-g1 { fill: #103029; }
.pos-g2 { fill: #0d3f36; }
.pos-r { fill: #3f1a1e; }
.pos-mid { stroke: #6e7a74; stroke-width: 1.5; }
.orange { stroke: #f2a424; stroke-width: 2.6; }
.wave { fill: none; stroke: #4a86bb; stroke-width: 2.4; }
.yl { stroke: #f4ef7a; stroke-width: 2.4; fill: none; }
.yl.thin { stroke-width: 1; }
.wave-labels text { fill: #4a86bb; font-size: 20.5px; text-anchor: middle; }
.cross { fill: none; stroke: #a0a0a0; stroke-width: 1; stroke-dasharray: 5 5; }
.bolt-mark circle { fill: #0f0f0f; stroke: #a04fc4; stroke-width: 1.6; }
.bolt-mark path { fill: #a04fc4; }
.ticks text { fill: #8f8f8f; font-size: 13.5px; text-anchor: end; letter-spacing: .3px; }
.tags text { fill: #f2f2f2; font-size: 13.5px; text-anchor: end; letter-spacing: .3px; }
.tags .t-sub { text-anchor: start; fill: #f7b7bd; }
.tags .t-dark { fill: #201400; }
.tags .t-center { text-anchor: middle; }
.t-cross { fill: #3d3d3d; }
.t-green { fill: #0d9b82; }
.t-red { fill: #f23645; }
.t-gray { fill: #7b7b7b; }
.t-orange { fill: #f79d10; }
.t-vol { fill: #ef5350; }
path.t-plus, circle.t-plus { fill: none; stroke: #eee; stroke-width: 1.2; }
.times text { fill: #9a9a9a; font-size: 13.5px; text-anchor: middle; }
.chart .time-cross { fill: #e2e2e2; font-size: 13.5px; text-anchor: middle; white-space: pre; letter-spacing: -.2px; font-variant-numeric: normal; }

.legend { position: absolute; left: 9px; top: 5px; }
.legend-title { display: flex; align-items: center; height: 24px; }
.coin { width: 19px; height: 20px; position: relative; display: block; flex: none; }
.coin-b { position: absolute; left: 1px; bottom: 0; width: 14px; height: 14px; border-radius: 50%; background: #f39a1e; color: #fff; font-style: normal; font-size: 10px; line-height: 14px; text-align: center; }
.coin-e { position: absolute; right: 0; top: 1px; width: 11px; height: 11px; border-radius: 50%; background: #23a08a; }
.legend-name { font-size: 17.3px; color: #dcdcdc; margin-left: 7px; white-space: nowrap; }
.live { width: 18px; height: 18px; border-radius: 50%; background: #10332e; margin-left: 20px; display: flex; align-items: center; justify-content: center; flex: none; }
.live i { width: 8px; height: 8px; border-radius: 50%; background: #089981; }
.ohlc { margin-left: 18px; font-size: 15.7px; color: #c23a40; white-space: nowrap; }
.ohlc b { font-weight: 400; color: #cfcfcf; }
.trade-row { display: flex; align-items: flex-start; margin-top: 7px; height: 42px; }
.trade { width: 96px; height: 39px; border-radius: 6px; border: 1px solid; display: flex; flex-direction: column; align-items: center; justify-content: center; margin-top: 1px; }
.trade strong { font-size: 14px; font-weight: 500; line-height: 17px; }
.trade small { font-size: 10px; line-height: 12px; }
.sell { color: #d23b44; border-color: #c03a41; }
.buy { color: #2f66d8; border-color: #2b5fc9; }
.qty { width: 44px; text-align: center; font-size: 12px; line-height: 41px; color: #aaa; }
.drawbar { margin-left: 9px; height: 43px; width: 500px; background: #1b1b1b; border-radius: 8px; display: flex; align-items: center; padding-left: 7px; gap: 17.2px; color: #cfcfcf; }
.drawbar .ic { width: 26px; height: 26px; }
.drawbar .grip { width: 12px; height: 18px; color: #555; margin-right: -3px; }
.study { font-size: 14.5px; line-height: 27px; color: #bdbdbd; white-space: nowrap; }
.study.first { margin-top: 2px; }
.study em { font-style: normal; color: #c23a40; margin-left: 6px; }
.collapse { width: 32px; height: 24px; border: 1px solid #2e2e2e; border-radius: 3px; display: flex; align-items: center; justify-content: center; margin: 3px 0 0 -2px; color: #ddd; }
.collapse .ic { width: 16px; height: 16px; stroke-width: 2.2; }

.pane-btns { position: absolute; left: 1389px; top: 5px; display: flex; gap: 5px; }
.pane-btn { width: 26px; height: 26px; border-radius: 4px; border: 1px solid #333; display: flex; align-items: center; justify-content: center; color: #ddd; }
.pane-btn .ic { width: 16px; height: 16px; stroke-width: 2; }
.pane-btn.blue { background: #1e50d2; border-color: #1e50d2; color: #dfe6ff; }

.watermark { position: absolute; left: 14px; top: 733px; display: flex; align-items: center; gap: 4px; color: #f4f4f4; font-size: 23.2px; font-weight: 600; letter-spacing: -.2px; text-shadow: 0 0 3px #000, 0 0 3px #000; }
.wm-logo { width: 34px; height: 24px; }
.axis-gear { position: absolute; left: 1488px; top: 776px; width: 20px; height: 20px; color: #d0d0d0; }

.range-bar { flex: 1; min-height: 0; display: flex; align-items: center; gap: 14.6px; padding: 2px 11px 0 19px; font-size: 15.5px; color: #cfcfcf; }
.range-bar .vsep { height: 25px; margin-left: -3px; background: #333; }
.go-date { width: 24px; height: 24px; margin-left: -3px; }
.utc { margin-left: auto; font-size: 16px; letter-spacing: .2px; }

.bottom-panel { height: 44px; flex: none; background: #0f0f0f; border-radius: 6px 6px 0 0; display: flex; align-items: center; padding: 0 10px 2px 18px; gap: 36px; font-size: 15px; color: #cfcfcf; }
.bottom-panel .tiny { margin-left: -21px; }
.bottom-panel .pine { margin-left: -8px; }
.caret { margin-left: auto; width: 22px; height: 22px; stroke-width: 1.5; }
.pexp { width: 22px; height: 22px; margin-left: -17px; }

.right-tools { flex: 1; background: #0f0f0f; display: flex; flex-direction: column; align-items: center; padding: 3px 0 2.5px; color: #cfcfcf; }
.rtool { height: 51px; width: 100%; display: flex; align-items: center; justify-content: center; flex: none; position: relative; }
.rtool .ic { width: 28px; height: 28px; }
.rtool.push { margin-top: auto; }
.chat-badge { position: absolute; left: 30px; top: 4px; width: 18px; height: 18px; border-radius: 50%; background: #f23645; color: #fff; font-size: 11px; font-weight: 500; display: flex; align-items: center; justify-content: center; }
```
FILE: chart.js
```js
(function () {
  var pts = [[63,750],[70,868],[72,847],[77,813],[89,747],[100,743],[117,693],[120,707],[137,737],[147,703],[150,747],[157,780],[170,803],[182,847],[190,770],[200,810],[208,773],[214,753],[216,640],[225,607],[230,627],[247,647],[263,657],[268,680],[270,743],[277,720],[290,710],[292,730],[293,693],[313,640],[327,620],[337,587],[355,620],[370,593],[380,593],[387,553],[410,543],[420,570],[440,577],[457,610],[470,567],[500,573],[517,563],[527,573],[550,530],[558,528],[565,557],[586,603],[598,608],[617,587],[627,563],[638,573],[651,587],[662,567],[679,567],[689,555],[720,568],[741,573],[758,570],[765,577],[775,555],[784,548]];
  var seed = 41;
  function rnd() { seed = (seed * 16807) % 2147483647; return (seed - 1) / 2147483646; }
  function at(x) {
    for (var i = 1; i < pts.length; i++) {
      if (x <= pts[i][0]) {
        var a = pts[i - 1], b = pts[i];
        return a[1] + (b[1] - a[1]) * (x - a[0]) / (b[0] - a[0]);
      }
    }
    return pts[pts.length - 1][1];
  }
  var step = 59 / 24, up = '', dn = '', upW = '', dnW = '';
  var prev = at(63);
  for (var x = 63.5; x <= 785; x += step) {
    var calm = x > 695 && x < 765 ? 0.35 : (x > 765 ? 0.6 : 1);
    var c = at(x) + (rnd() - 0.5) * 24 * calm;
    var top = Math.min(prev, c), bot = Math.max(prev, c);
    var hi = top - rnd() * 11 * calm, lo = bot + rnd() * 11 * calm;
    var h = Math.max(bot - top, 1);
    var body = 'M' + (x - 1).toFixed(1) + ' ' + top.toFixed(1) + 'h2v' + h.toFixed(1) + 'h-2z';
    var wick = 'M' + x.toFixed(1) + ' ' + hi.toFixed(1) + 'V' + lo.toFixed(1);
    if (c < prev) { up += body; upW += wick; } else { dn += body; dnW += wick; }
    prev = c;
  }
  upW += 'M89 667V900M216 640V870';
  dnW += 'M70 845V955M560 513V565M627 543V608';
  var svg = '<path d="' + upW + '" stroke="#0e9a82" stroke-width="1" fill="none"/>' +
    '<path d="' + dnW + '" stroke="#ea3a4b" stroke-width="1" fill="none"/>' +
    '<path d="' + up + '" fill="#0e9a82"/><path d="' + dn + '" fill="#ea3a4b"/>';
  document.getElementById('candles').innerHTML = svg;

  var spikes = { 69: 75, 89: 85, 91: 60, 175: 60, 199: 60, 216: 85, 221: 70, 269: 67, 324: 35, 330: 34, 381: 35, 420: 28, 473: 40, 477: 36, 504: 30, 560: 33, 626: 35, 630: 26, 682: 18 };
  var volUp = '', volDn = '';
  seed = 97;
  for (var v = 63.5; v <= 785; v += step) {
    var env = v < 260 ? 34 : (v < 275 ? 30 : (v < 680 ? 17 : (v < 695 ? 12 : (v < 765 ? 5 : 10))));
    var hgt = 3 + rnd() * env;
    for (var k in spikes) { if (Math.abs(v - k) < 1.3) hgt = spikes[k]; }
    var bar = 'M' + (v - 0.8).toFixed(1) + ' ' + (955 - hgt).toFixed(1) + 'h1.6V955h-1.6z';
    if (rnd() > 0.5) volUp += bar; else volDn += bar;
  }
  document.getElementById('volume').innerHTML = '<path d="' + volUp + '" fill="#1d7a6c"/><path d="' + volDn + '" fill="#a83b40"/>';
})();
```
